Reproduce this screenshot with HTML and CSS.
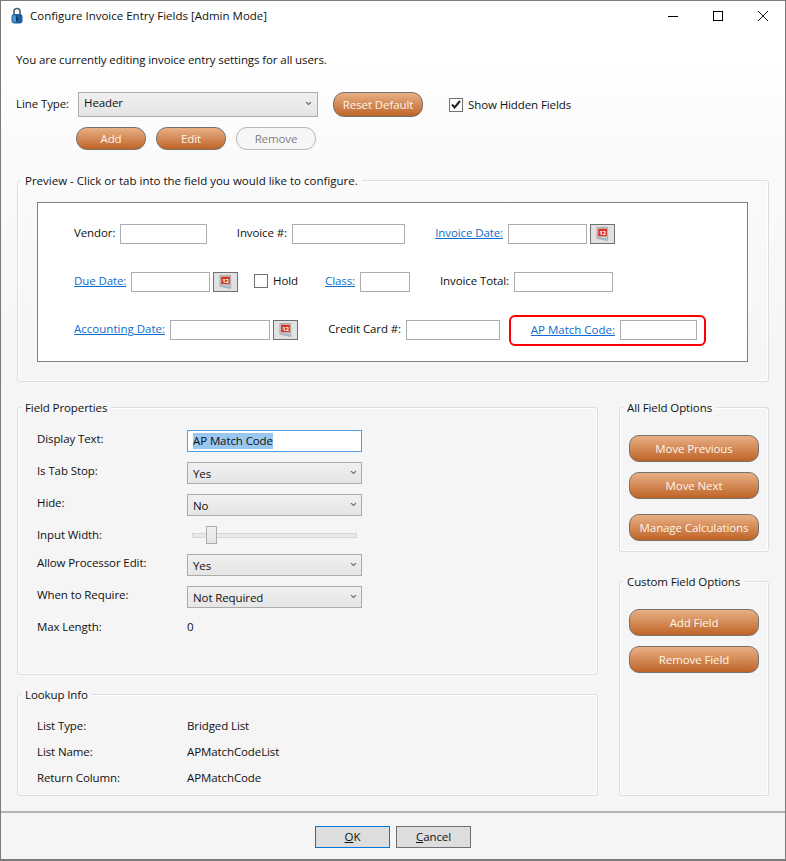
FILE: index.html
```html
<!DOCTYPE html>
<html>
<head>
    <meta charset="utf-8">
    <title>Configure Invoice Entry Fields</title>
    <link rel="stylesheet" href="styles.css">
</head>
<body>
<div class="window">
    <div class="titlebar">
        <svg class="lock" width="12" height="17" viewBox="0 0 12 17">
            <path d="M3 8V4.5a3 3 0 0 1 6 0V8" fill="none" stroke="#4c5f70" stroke-width="1.6"/>
            <rect x="0.5" y="7" width="11" height="9.5" rx="3" fill="#1c5f9e"/>
            <rect x="1.5" y="8" width="3.5" height="7.5" rx="1.5" fill="#4f93cf"/>
            <rect x="5.2" y="10" width="1.6" height="3.5" fill="#0c2f52"/>
        </svg>
        <span class="title">Configure Invoice Entry Fields [Admin Mode]</span>
        <div class="controls">
            <svg width="10" height="10" viewBox="0 0 10 10"><path d="M0 5.5h10" stroke="#000"/></svg>
            <svg width="10" height="10" viewBox="0 0 10 10"><rect x="0.5" y="0.5" width="9" height="9" fill="none" stroke="#000"/></svg>
            <svg width="10" height="10" viewBox="0 0 10 10"><path d="M0 0l10 10M10 0L0 10" stroke="#000" stroke-width="0.9"/></svg>
        </div>
    </div>

    <div class="content">
        <p class="intro">You are currently editing invoice entry settings for all users.</p>

        <div class="line-type">
            <span class="line-label">Line Type:</span>
            <div class="combo combo-wide">Header
                <svg class="chev" width="7" height="5" viewBox="0 0 7 5"><path d="M1 1.2l2.5 2.3L6 1.2" fill="none" stroke="#666" stroke-width="1.1"/></svg>
            </div>
            <button class="orange btn-reset">Reset Default</button>
            <span class="check check-on">
                <svg width="10" height="9" viewBox="0 0 10 9"><path d="M1 4.5l2.6 3L9 1" fill="none" stroke="#222" stroke-width="2"/></svg>
            </span>
            <span>Show Hidden Fields</span>
        </div>

        <div class="actions">
            <button class="orange btn-small">Add</button>
            <button class="orange btn-small">Edit</button>
            <button class="btn-disabled">Remove</button>
        </div>

        <div class="group group-preview">
            <span class="legend legend-light">Preview - Click or tab into the field you would like to configure.</span>
            <div class="preview">
                <div class="pv-row pv-row1">
                    <span class="pv-label">Vendor:</span>
                    <input class="field">
                    <span class="pv-label">Invoice #:</span>
                    <input class="field">
                    <a class="pv-label link">Invoice Date:</a>
                    <input class="field">
                    <span></span>
                    <button class="cal">
                        <svg width="13" height="14" viewBox="0 0 15 16">
                            <path d="M1 0.5h12.5v15L1 13z" fill="#c6c8ca" stroke="#8a8a8a" stroke-width="0.6"/>
                            <rect x="2.5" y="2" width="10" height="8.5" fill="#d9341f"/>
                            <text x="7.5" y="9.5" class="cal-text">12</text>
                            <path d="M2 12l11 2" stroke="#8fb6dc"/>
                        </svg>
                    </button>
                </div>
                <div class="pv-row pv-row2">
                    <a class="pv-label link">Due Date:</a>
                    <input class="field">
                    <span></span>
                    <button class="cal">
                        <svg width="13" height="14" viewBox="0 0 15 16">
                            <path d="M1 0.5h12.5v15L1 13z" fill="#c6c8ca" stroke="#8a8a8a" stroke-width="0.6"/>
                            <rect x="2.5" y="2" width="10" height="8.5" fill="#d9341f"/>
                            <text x="7.5" y="9.5" class="cal-text">12</text>
                            <path d="M2 12l11 2" stroke="#8fb6dc"/>
                        </svg>
                    </button>
                    <div class="hold"><span class="check"></span><span class="hold-text">Hold</span></div>
                    <a class="pv-label link">Class:</a>
                    <input class="field">
                    <span class="pv-label">Invoice Total:</span>
                    <input class="field">
                </div>
                <div class="pv-row pv-row3">
                    <a class="pv-label link">Accounting Date:</a>
                    <input class="field">
                    <span></span>
                    <button class="cal">
                        <svg width="13" height="14" viewBox="0 0 15 16">
                            <path d="M1 0.5h12.5v15L1 13z" fill="#c6c8ca" stroke="#8a8a8a" stroke-width="0.6"/>
                            <rect x="2.5" y="2" width="10" height="8.5" fill="#d9341f"/>
                            <text x="7.5" y="9.5" class="cal-text">12</text>
                            <path d="M2 12l11 2" stroke="#8fb6dc"/>
                        </svg>
                    </button>
                    <span class="pv-label">Credit Card #:</span>
                    <input class="field">
                    <div class="highlight">
                        <a class="pv-label link hl-label">AP Match Code:</a>
                        <input class="field hl-field">
                    </div>
                </div>
            </div>
        </div>

        <div class="lower">
            <div class="left-col">
                <div class="group group-props">
                    <span class="legend">Field Properties</span>
                    <div class="props">
                        <span class="prop-label">Display Text:</span>
                        <div class="textbox"><span class="selected">AP Match Code</span></div>
                        <span class="prop-label">Is Tab Stop:</span>
                        <div class="combo">Yes
                            <svg class="chev" width="7" height="5" viewBox="0 0 7 5"><path d="M1 1.2l2.5 2.3L6 1.2" fill="none" stroke="#666" stroke-width="1.1"/></svg>
                        </div>
                        <span class="prop-label">Hide:</span>
                        <div class="combo">No
                            <svg class="chev" width="7" height="5" viewBox="0 0 7 5"><path d="M1 1.2l2.5 2.3L6 1.2" fill="none" stroke="#666" stroke-width="1.1"/></svg>
                        </div>
                        <span class="prop-label">Input Width:</span>
                        <div class="slider"><div class="track"></div><div class="thumb"></div></div>
                        <span class="prop-label">Allow Processor Edit:</span>
                        <div class="combo">Yes
                            <svg class="chev" width="7" height="5" viewBox="0 0 7 5"><path d="M1 1.2l2.5 2.3L6 1.2" fill="none" stroke="#666" stroke-width="1.1"/></svg>
                        </div>
                        <span class="prop-label">When to Require:</span>
                        <div class="combo">Not Required
                            <svg class="chev" width="7" height="5" viewBox="0 0 7 5"><path d="M1 1.2l2.5 2.3L6 1.2" fill="none" stroke="#666" stroke-width="1.1"/></svg>
                        </div>
                        <span class="prop-label">Max Length:</span>
                        <span class="prop-label">0</span>
                    </div>
                </div>
                <div class="group group-lookup">
                    <span class="legend">Lookup Info</span>
                    <div class="lookup">
                        <span>List Type:</span><span>Bridged List</span>
                        <span>List Name:</span><span>APMatchCodeList</span>
                        <span>Return Column:</span><span>APMatchCode</span>
                    </div>
                </div>
            </div>
            <div class="right-col">
                <div class="group group-all">
                    <span class="legend">All Field Options</span>
                    <button class="orange btn-side">Move Previous</button>
                    <button class="orange btn-side btn-next">Move Next</button>
                    <button class="orange btn-side btn-calc">Manage Calculations</button>
                </div>
                <div class="group group-custom">
                    <span class="legend">Custom Field Options</span>
                    <button class="orange btn-side">Add Field</button>
                    <button class="orange btn-side btn-next">Remove Field</button>
                </div>
            </div>
        </div>
    </div>

    <div class="footer">
        <button class="dlg dlg-default"><u>O</u>K</button>
        <button class="dlg"><u>C</u>ancel</button>
    </div>
</div>
</body>
</html>
```

FILE: styles.css
```css
* {
    box-sizing: border-box;
}

html, body {
    margin: 0;
    padding: 0;
    height: 861px;
    overflow: hidden;
    background: #fff;
}

body, button, input {
    font: 11.5px/16px "Open Sans", "Noto Sans", sans-serif;
    letter-spacing: -0.1px;
    color: #111;
}

.window {
    width: 786px;
    height: 861px;
    display: flex;
    flex-direction: column;
    border: 1px solid #7a7a7a;
    border-bottom-width: 2px;
    background: linear-gradient(#fff 0, #fff 60px, #fbfbfb 130px, #f5f5f5 380px);
}

.titlebar {
    height: 30px;
    display: flex;
    align-items: center;
    flex: none;
    padding-left: 10px;
}

.lock {
    margin: -2px 7px 0 0;
}

.title {
    flex: 1;
    letter-spacing: 0;
}

.controls {
    display: flex;
    gap: 35px;
    padding-right: 17px;
}

.content {
    flex: 1;
    padding: 0 15px;
}

.intro {
    margin: 21px 0 0;
}

.line-type {
    display: flex;
    align-items: center;
    height: 25px;
    margin-top: 24px;
}

.line-label {
    width: 62px;
    flex: none;
    margin-top: -2px;
}

.combo {
    position: relative;
    height: 22px;
    line-height: 22px;
    padding-left: 5px;
    border: 1px solid #acacac;
    background: linear-gradient(#f0f0f0, #e5e5e5);
}

.combo-wide {
    width: 240px;
    height: 25px;
    line-height: 20px;
}

.chev {
    position: absolute;
    right: 4px;
    top: 7px;
}

.combo-wide .chev {
    right: 5px;
    top: 8px;
}

.orange {
    padding: 0;
    color: #fdf4ea;
    border: 1px solid #74706c;
    border-radius: 11px;
    background: linear-gradient(#e9b086, #be6427);
}

.btn-reset {
    width: 90px;
    height: 25px;
    margin: 0 26px 0 15px;
}

.check {
    width: 14px;
    height: 14px;
    flex: none;
    display: flex;
    align-items: center;
    justify-content: center;
    margin-right: 5px;
    border: 1px solid #707070;
    background: #fff;
}

.actions {
    display: flex;
    gap: 10px;
    margin: 10px 0 0 60px;
}

.btn-small {
    width: 70px;
    height: 23px;
}

.btn-disabled {
    width: 80px;
    height: 23px;
    padding: 0;
    color: #7f7f7f;
    border: 1px solid #b8b8b8;
    border-radius: 11px;
    background: #f6f6f6;
}

.group {
    position: relative;
    border: 1px solid #d5dfe5;
    border-radius: 3px;
    box-shadow: inset 0 0 0 1px #fff;
}

.legend {
    position: absolute;
    top: -8px;
    left: 3px;
    padding: 0 4px;
    background: #f6f6f6;
}

.legend-light {
    background: #fbfbfb;
    letter-spacing: 0;
}

.group-preview {
    height: 202px;
    margin: 30px 0 0 1px;
    width: 752px;
    padding: 21px 20px 0 19px;
}

.preview {
    height: 160px;
    padding: 21px 0 0 36px;
    border: 1px solid #808080;
    background: #fff;
}

.pv-row {
    display: grid;
    grid-auto-rows: 20px;
    align-items: center;
    margin-bottom: 28px;
}

.pv-row1 {
    grid-template-columns: 46px 87px 85px 113px 103px 79px 3px 25px;
}

.pv-row2 {
    grid-template-columns: 57px 79px 3px 25px 77px 45px 50px 104px 99px;
}

.pv-row3 {
    grid-template-columns: 96px 100px 3px 25px 108px 94px 206px;
}

.pv-label {
    text-align: right;
    padding-right: 5px;
    white-space: nowrap;
    margin-top: -2px;
}

.link {
    color: #0f6cd0;
    text-decoration: underline;
}

.pv-row3 .link {
    letter-spacing: 0;
}

.field {
    display: block;
    width: 100%;
    height: 20px;
    margin: 0;
    padding: 0;
    border: 1px solid #abadb3;
    background: #fff;
}

.cal {
    width: 25px;
    height: 20px;
    padding: 0;
    display: flex;
    align-items: center;
    justify-content: center;
    border: 1px solid #707070;
    background: #e1e1e1;
}

.cal-text {
    font-size: 7px;
    font-weight: 700;
    fill: #fff;
    text-anchor: middle;
}

.hold {
    display: flex;
    align-items: center;
    padding-left: 16px;
    margin-top: -2px;
}

.highlight {
    display: flex;
    align-items: center;
    justify-content: flex-end;
    height: 31px;
    width: 197px;
    margin: 0 0 0 9px;
    padding-right: 7px;
    border: 2px solid #f00;
    border-radius: 6px;
}

.hl-label {
    margin-top: 0;
}

.hl-field {
    width: 77px;
}

.lower {
    display: flex;
    gap: 21px;
    margin: 25px 0 0 1px;
}

.left-col {
    width: 581px;
    display: flex;
    flex-direction: column;
    gap: 19px;
}

.right-col {
    width: 150px;
    display: flex;
    flex-direction: column;
    gap: 29px;
}

.group-props {
    height: 268px;
    padding: 22px 0 0 19px;
}

.props {
    display: grid;
    grid-template-columns: 150px 175px;
    grid-template-rows: 22px 22px 22px 18px 22px 22px 20px;
    row-gap: 10px;
}

.prop-label {
    padding-top: 1px;
}

.textbox {
    padding: 2px 0 0 5px;
    border: 1px solid #569de5;
    background: #fff;
}

.selected {
    display: inline-block;
    height: 16px;
    background: #9ac7ef;
}

.slider {
    position: relative;
}

.track {
    width: 165px;
    height: 5px;
    margin: 7px 0 0 5px;
    border: 1px solid #d6d6d6;
    background: #e7eaea;
}

.thumb {
    position: absolute;
    left: 19px;
    top: 0;
    width: 11px;
    height: 18px;
    border: 1px solid #acacac;
    background: linear-gradient(#f0f0f0, #e5e5e5);
}

.group-lookup {
    height: 102px;
    padding: 23px 0 0 19px;
}

.lookup {
    display: grid;
    grid-template-columns: 150px 1fr;
    grid-auto-rows: 26px;
}

.group-all {
    height: 145px;
    padding: 27px 0 0 9px;
}

.group-custom {
    height: 215px;
    padding: 27px 0 0 9px;
}

.btn-side {
    display: block;
    width: 130px;
    height: 27px;
    border-radius: 10px;
}

.btn-next {
    margin-top: 10px;
}

.btn-calc {
    margin-top: 15px;
}

.footer {
    flex: none;
    height: 48px;
    display: flex;
    justify-content: center;
    gap: 6px;
    padding-top: 13px;
    margin-top: 14px;
    border-top: 2px solid #b4b4b4;
    background: #f5f5f5;
}

.dlg {
    width: 75px;
    height: 22px;
    padding: 0;
    border: 1px solid #707070;
    background: #dddddd;
}

.dlg-default {
    border: 1px solid #0078d7;
}
```
